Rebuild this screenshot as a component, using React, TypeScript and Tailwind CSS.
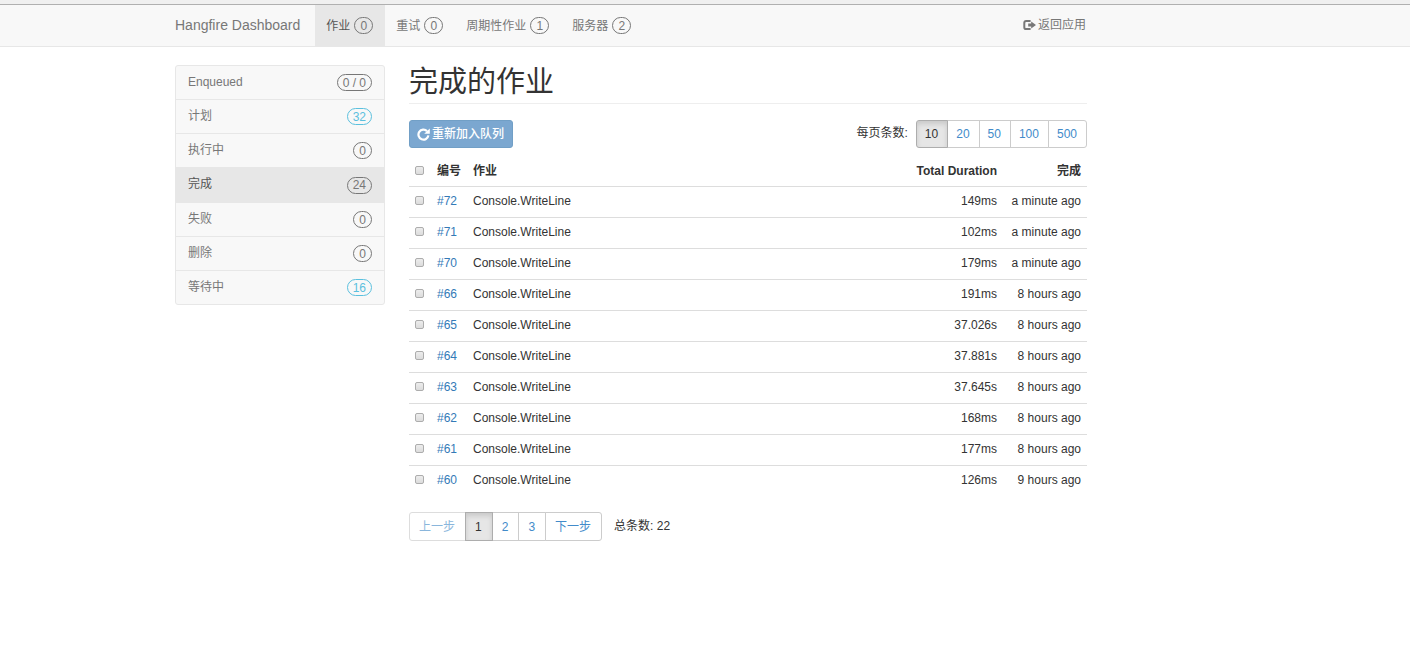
import React, { useState } from "react";

type Tone = "default" | "info";

const navItems = [
  { label: "作业", count: "0", active: true },
  { label: "重试", count: "0", active: false },
  { label: "周期性作业", count: "1", active: false },
  { label: "服务器", count: "2", active: false },
];

const sideItems: { label: string; count: string; tone: Tone; active?: boolean }[] = [
  { label: "Enqueued", count: "0 / 0", tone: "default" },
  { label: "计划", count: "32", tone: "info" },
  { label: "执行中", count: "0", tone: "default" },
  { label: "完成", count: "24", tone: "default", active: true },
  { label: "失败", count: "0", tone: "default" },
  { label: "删除", count: "0", tone: "default" },
  { label: "等待中", count: "16", tone: "info" },
];

const jobs = [
  { id: "#72", duration: "149ms", done: "a minute ago" },
  { id: "#71", duration: "102ms", done: "a minute ago" },
  { id: "#70", duration: "179ms", done: "a minute ago" },
  { id: "#66", duration: "191ms", done: "8 hours ago" },
  { id: "#65", duration: "37.026s", done: "8 hours ago" },
  { id: "#64", duration: "37.881s", done: "8 hours ago" },
  { id: "#63", duration: "37.645s", done: "8 hours ago" },
  { id: "#62", duration: "168ms", done: "8 hours ago" },
  { id: "#61", duration: "177ms", done: "8 hours ago" },
  { id: "#60", duration: "126ms", done: "9 hours ago" },
];

function Badge({ children, tone = "default" }: { children: React.ReactNode; tone?: Tone }) {
  const color = tone === "info" ? "border-[#5bc0de] text-[#5bc0de]" : "border-[#777] text-[#777]";
  return (
    <span className={`inline-flex h-[17px] min-w-[19px] items-center justify-center rounded-full border px-[5px] text-xs leading-none ${color}`}>
      {children}
    </span>
  );
}

function LogOutIcon() {
  return (
    <svg viewBox="0 0 13 12" className="h-3 w-[13px] shrink-0" aria-hidden="true">
      <path d="M7.6 1.9H3.2Q1.3 1.9 1.3 3.8V8.2Q1.3 10.1 3.2 10.1H7.6" fill="none" stroke="currentColor" strokeWidth="2" />
      <path d="M8.2 2.4 13 6 8.2 9.6V7.4H5.2V4.6H8.2Z" fill="currentColor" />
    </svg>
  );
}

function RepeatIcon() {
  return (
    <svg viewBox="0 0 13 13" className="size-[13px] shrink-0" aria-hidden="true">
      <path d="M10 3.1A5 5 0 1 0 11.4 7.4" fill="none" stroke="currentColor" strokeWidth="2.2" />
      <path d="M12.8 0.4V5.8H7.2Z" fill="currentColor" />
    </svg>
  );
}

function Check({ label, checked, onChange }: { label: string; checked: boolean; onChange: () => void }) {
  return (
    <input
      type="checkbox"
      aria-label={label}
      checked={checked}
      onChange={onChange}
      className="block size-[9px] appearance-none rounded-[2px] border border-[#adadad] bg-linear-to-b from-[#ededed] to-[#dcdcdc] checked:bg-[#428bca]"
    />
  );
}

function GroupButton({ children, active, disabled }: { children: React.ReactNode; active?: boolean; disabled?: boolean }) {
  const look = active
    ? "z-10 border-[#adadad] bg-[#e6e6e6] text-[#333] shadow-[inset_0_3px_5px_rgba(0,0,0,0.125)]"
    : disabled
      ? "border-[#ddd] bg-white text-[#8ab6dc]"
      : "border-[#ccc] bg-white text-[#428bca]";
  return (
    <button
      type="button"
      disabled={disabled}
      className={`relative -ml-px border pr-[9px] pl-2 leading-[18px] first:ml-0 first:rounded-l-[3px] last:rounded-r-[3px] ${look}`}
    >
      {children}
    </button>
  );
}

export default function App() {
  const [selected, setSelected] = useState<string[]>([]);
  const toggle = (id: string) =>
    setSelected((s) => (s.includes(id) ? s.filter((x) => x !== id) : [...s, id]));
  const toggleAll = () => setSelected((s) => (s.length === jobs.length ? [] : jobs.map((j) => j.id)));

  return (
    <div className="min-h-screen bg-white font-['Liberation_Sans','Noto_Sans_CJK_SC',sans-serif] text-xs leading-5 text-[#333]">
      <div className="h-[5px] border-b border-[#b0b0b0] bg-[#f0f0f0]" />
      <header className="border-b border-[#e7e7e7] bg-[#f8f8f8]">
        <div className="ml-4 flex h-[41px] max-w-[912px] text-[#777] lg:ml-[175px]">
          <a href="#" className="flex items-center pr-[15px] pb-0.5 text-sm">Hangfire Dashboard</a>
          <nav className="flex">
            {navItems.map((item) => (
              <a
                key={item.label}
                href="#"
                className={`flex items-center gap-1 pr-3 pl-[11px] ${item.active ? "bg-[#e7e7e7] text-[#555]" : ""}`}
              >
                {item.label}
                <Badge>{item.count}</Badge>
              </a>
            ))}
          </nav>
          <a href="#" className="ml-auto flex items-center gap-0.5 pr-px pb-0.5">
            <LogOutIcon />
            返回应用
          </a>
        </div>
      </header>

      <div className="ml-4 flex max-w-[912px] items-start gap-6 pt-[18px] lg:ml-[175px]">
        <aside className="w-[210px] shrink-0 overflow-hidden rounded-[3px] border border-[#e7e7e7] bg-[#f8f8f8]">
          {sideItems.map((item) => (
            <a
              key={item.label}
              href="#"
              className={`flex items-center justify-between border-b border-[#e7e7e7] px-3 last:h-[33px] last:border-b-0 ${
                item.active ? "h-[35px] bg-[#e7e7e7] text-[#555]" : "h-[34px] text-[#777]"
              }`}
            >
              <span className="pb-0.5">{item.label}</span>
              <Badge tone={item.tone}>{item.count}</Badge>
            </a>
          ))}
        </aside>

        <main className="min-w-0 flex-1">
          <h1 className="border-b border-[#eee] pt-0.5 pb-1.5 text-[29px] leading-[30px] font-normal">完成的作业</h1>

          <div className="mt-4 flex items-start justify-between">
            <button
              type="button"
              disabled
              className="flex h-7 items-center gap-0.5 rounded-[3px] border border-[#719fc6] bg-[#7ba7d0] pr-2 pl-[7px] font-medium text-white"
            >
              <RepeatIcon />
              重新加入队列
            </button>
            <div className="flex items-center gap-2">
              <span className="pb-0.5">每页条数:</span>
              <div className="flex h-7">
                <GroupButton active>10</GroupButton>
                <GroupButton>20</GroupButton>
                <GroupButton>50</GroupButton>
                <GroupButton>100</GroupButton>
                <GroupButton>500</GroupButton>
              </div>
            </div>
          </div>

          <table className="mt-[7px] w-full border-collapse">
            <thead>
              <tr className="h-[31px] text-left">
                <th className="w-[22px] pl-1.5">
                  <Check label="全选" checked={selected.length === jobs.length} onChange={toggleAll} />
                </th>
                <th className="w-9 px-1.5 pt-0.5">编号</th>
                <th className="px-1.5 pt-0.5">作业</th>
                <th className="w-[94px] px-1.5 pt-0.5 text-right whitespace-nowrap">Total Duration</th>
                <th className="w-[84px] px-1.5 pt-0.5 text-right">完成</th>
              </tr>
            </thead>
            <tbody>
              {jobs.map((job) => (
                <tr key={job.id} className="h-[31px] border-t border-[#ddd]">
                  <td className="pb-0.5 pl-1.5">
                    <Check label={job.id} checked={selected.includes(job.id)} onChange={() => toggle(job.id)} />
                  </td>
                  <td className="px-1.5 pb-0.5">
                    <a href="#" className="text-[#337ab7]">{job.id}</a>
                  </td>
                  <td className="px-1.5 pb-0.5">Console.WriteLine</td>
                  <td className="px-1.5 pb-0.5 text-right">{job.duration}</td>
                  <td className="px-1.5 pb-0.5 text-right whitespace-nowrap">{job.done}</td>
                </tr>
              ))}
            </tbody>
          </table>

          <div className="mt-4 flex items-center gap-3">
            <nav className="flex h-[29px]" aria-label="分页">
              <GroupButton disabled><span className="px-px">上一步</span></GroupButton>
              <GroupButton active><span className="px-px">1</span></GroupButton>
              <GroupButton><span className="px-px">2</span></GroupButton>
              <GroupButton><span className="px-px">3</span></GroupButton>
              <GroupButton><span className="px-px">下一步</span></GroupButton>
            </nav>
            <span className="pb-0.5">总条数: 22</span>
          </div>
        </main>
      </div>
    </div>
  );
}
